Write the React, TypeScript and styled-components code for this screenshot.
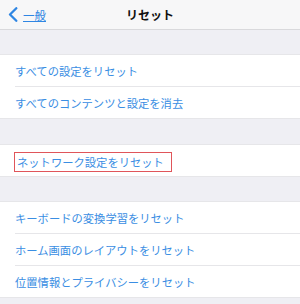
import React from "react";
import styled, { createGlobalStyle } from "styled-components";

const Global = createGlobalStyle`
  html, body { margin: 0; padding: 0; background: #efeff4; }
  body { font-family: "Noto Sans CJK JP", "Noto Sans", sans-serif; -webkit-font-smoothing: antialiased; }
`;

const Page = styled.div`
  width: 300px;
  height: 304px;
  background: #efeff4;
  overflow: hidden;
`;

const NavBar = styled.div`
  height: 29px;
  background: #f7f7f8;
  border-bottom: 1px solid #d9d9dc;
  display: grid;
  grid-template-columns: 1fr auto 1fr;
  align-items: center;
`;

const Back = styled.div`
  display: flex;
  align-items: center;
  gap: 5px;
  padding-left: 8px;
  color: #2f86e3;
  font-size: 11.5px;
`;

const BackLabel = styled.span`
  text-decoration: underline;
  text-underline-offset: 1px;
  text-decoration-thickness: 1px;
`;

const Title = styled.div`
  font-size: 12px;
  font-weight: 700;
  color: #111;
`;

const Gap = styled.div<{ $h: number }>`
  height: ${(p) => p.$h}px;
`;

const Group = styled.div`
  background: #fff;
  border-top: 1px solid #e6e6e9;
  border-bottom: 1px solid #e6e6e9;
`;

const Row = styled.div`
  height: 31px;
  margin-left: 15px;
  display: flex;
  align-items: center;
  color: #3a8ee3;
  font-size: 11.3px;
  & + & {
    border-top: 1px solid #e6e6e9;
  }
`;

const Highlight = styled.span`
  display: inline-block;
  margin-left: -1px;
  margin-top: 3px;
  padding: 0 7px 0 2px;
  line-height: 18px;
  border: 1px solid #e0555a;
`;

const Chevron = () => (
  <svg width="10" height="15" viewBox="0 0 10 15">
    <path d="M8.3 1.2 L2 7.5 L8.3 13.8" fill="none" stroke="#2f86e3" strokeWidth="2.3" strokeLinecap="round" strokeLinejoin="round" />
  </svg>
);

export default function App() {
  return (
    <Page>
      <Global />
      <NavBar>
        <Back>
          <Chevron />
          <BackLabel>一般</BackLabel>
        </Back>
        <Title>リセット</Title>
        <div />
      </NavBar>
      <Gap $h={24} />
      <Group>
        <Row>すべての設定をリセット</Row>
        <Row>すべてのコンテンツと設定を消去</Row>
      </Group>
      <Gap $h={25} />
      <Group>
        <Row>
          <Highlight>ネットワーク設定をリセット</Highlight>
        </Row>
      </Group>
      <Gap $h={24} />
      <Group>
        <Row>キーボードの変換学習をリセット</Row>
        <Row>ホーム画面のレイアウトをリセット</Row>
        <Row>位置情報とプライバシーをリセット</Row>
      </Group>
    </Page>
  );
}
